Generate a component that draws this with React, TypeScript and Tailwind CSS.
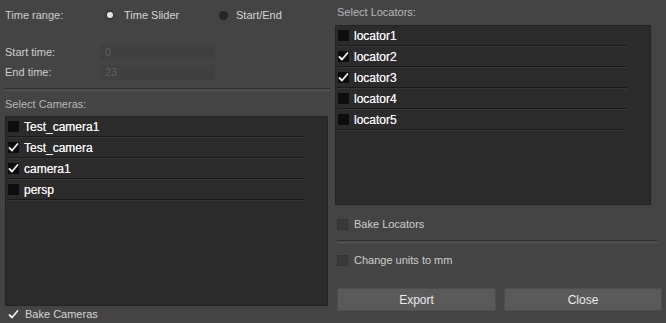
import React from "react";

const font = { fontFamily: '"Liberation Sans", Arial, sans-serif' };

function Check({ checked, dark = true }: { checked: boolean; dark?: boolean }) {
  return (
    <div
      className={`w-[11px] h-[11px] flex items-center justify-center shrink-0 ${
        dark ? "bg-[#0d0d0d]" : "bg-[#3a3a3a] border border-[#333]"
      }`}
    >
      {checked && (
        <svg width="11" height="11" viewBox="0 0 11 11">
          <path d="M1.5 6 L4 8.5 L9.5 2" stroke="#f2f2f2" strokeWidth="1.8" fill="none" strokeLinecap="round" strokeLinejoin="round" />
        </svg>
      )}
    </div>
  );
}

function Row({ label, checked, lineW }: { label: string; checked: boolean; lineW: string }) {
  return (
    <div className="h-[21px] flex flex-col">
      <div className="flex-1 flex items-center gap-[5px] pl-[1px]">
        <Check checked={checked} />
        <span className="text-[12px] text-[#f2f2f2] [text-shadow:0_0_0.4px_#f2f2f2]">{label}</span>
      </div>
      <div className={`h-[1px] bg-[#1a1a1a] ${lineW}`} />
      <div className={`h-[1px] bg-[#363636] ${lineW}`} />
    </div>
  );
}

export default function App() {
  return (
    <div className="w-[666px] h-[323px] bg-[#444444] flex overflow-hidden text-[11px]" style={font}>
      {/* Left column */}
      <div className="w-[330px] flex flex-col pl-[5px]">
        <div className="h-[30px] flex items-center">
          <span className="text-[#cfcfcf] w-[96px]">Time range:</span>
          <div className="flex items-center gap-[9px] w-[118px] pl-[4px]">
            <div className="w-[6px] h-[6px] rounded-full bg-[#e6e6e6] border-2 border-[#3a3a3a] box-content" />
            <span className="text-[#d6d6d6]">Time Slider</span>
          </div>
          <div className="flex items-center gap-[8px]">
            <div className="w-[9px] h-[9px] rounded-full bg-[#262626]" />
            <span className="text-[#d6d6d6]">Start/End</span>
          </div>
        </div>
        <div className="h-[15px]" />
        <div className="h-[15px] flex items-center">
          <span className="text-[#cfcfcf] w-[95px]">Start time:</span>
          <div className="w-[115px] h-[15px] bg-[#404040] text-[#5e5e5e] pl-[5px] flex items-center">0</div>
        </div>
        <div className="h-[5px]" />
        <div className="h-[15px] flex items-center">
          <span className="text-[#cfcfcf] w-[95px]">End time:</span>
          <div className="w-[115px] h-[15px] bg-[#404040] text-[#5e5e5e] pl-[5px] flex items-center">23</div>
        </div>
        <div className="h-[8px]" />
        <div className="h-[3px] border-t border-[#2e2e2e] border-b border-b-[#585858]" />
        <div className="h-[25px] flex items-center pt-[2px] text-[#b9b9b9]">Select Cameras:</div>
        <div className="w-[323px] h-[190px] bg-[#2b2b2b] border border-[#232323] pl-[1px]">
          <Row label="Test_camera1" checked={false} lineW="w-[298px]" />
          <Row label="Test_camera" checked={true} lineW="w-[298px]" />
          <Row label="camera1" checked={true} lineW="w-[298px]" />
          <Row label="persp" checked={false} lineW="w-[298px]" />
        </div>
        <div className="h-[17px] flex items-center gap-[6px] pl-[3px]">
          <svg width="11" height="11" viewBox="0 0 11 11">
            <path d="M1.5 6 L4 8.5 L9.5 2" stroke="#ececec" strokeWidth="1.8" fill="none" strokeLinecap="round" strokeLinejoin="round" />
          </svg>
          <span className="text-[#d6d6d6]">Bake Cameras</span>
        </div>
      </div>

      {/* Right column */}
      <div className="flex-1 flex flex-col pl-[5px] pr-[3px]">
        <div className="h-[25px] flex items-center pl-[2px] text-[#b9b9b9]">Select Locators:</div>
        <div className="w-[316px] h-[180px] bg-[#2b2b2b] border border-[#232323] pl-[1px]">
          <Row label="locator1" checked={false} lineW="w-[290px]" />
          <Row label="locator2" checked={true} lineW="w-[290px]" />
          <Row label="locator3" checked={true} lineW="w-[290px]" />
          <Row label="locator4" checked={false} lineW="w-[290px]" />
          <Row label="locator5" checked={false} lineW="w-[290px]" />
        </div>
        <div className="h-[35px] flex items-center gap-[6px] pl-[2px] pt-[4px]">
          <Check checked={false} dark={false} />
          <span className="text-[#cfcfcf]">Bake Locators</span>
        </div>
        <div className="h-[3px] border-t border-[#2e2e2e] border-b border-b-[#585858] ml-[2px] mr-[6px]" />
        <div className="h-[34px] flex items-center gap-[6px] pl-[2px]">
          <Check checked={false} dark={false} />
          <span className="text-[#cfcfcf]">Change units to mm</span>
        </div>
        <div className="h-[11px]" />
        <div className="flex gap-[8px] pl-[2px]">
          <div className="w-[159px] h-[23px] bg-[#5a5a5a] border border-[#4e4e4e] flex items-center justify-center text-[#ececec] text-[12px]">Export</div>
          <div className="w-[158px] h-[23px] bg-[#5a5a5a] border border-[#4e4e4e] flex items-center justify-center text-[#ececec] text-[12px]">Close</div>
        </div>
      </div>
    </div>
  );
}
